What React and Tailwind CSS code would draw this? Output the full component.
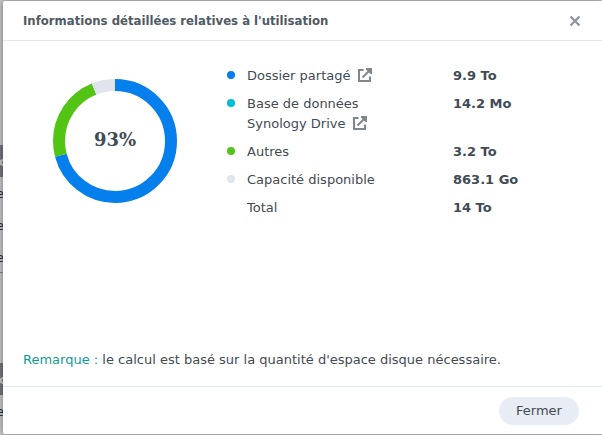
import React from 'react';

const usage = [
  { id: 'shared', label: 'Dossier partagé', value: '9.9 To', dot: 'bg-[#057feb]', stroke: 'stroke-[#057feb]', start: 0, share: 70.9, link: true },
  { id: 'drive', label: 'Base de données Synology Drive', value: '14.2 Mo', dot: 'bg-[#00bcd4]', link: true },
  { id: 'others', label: 'Autres', value: '3.2 To', dot: 'bg-[#52c41a]', stroke: 'stroke-[#52c414]', start: 70.9, share: 23 },
  { id: 'free', label: 'Capacité disponible', value: '863.1 Go', dot: 'bg-[#e1e4ed]', stroke: 'stroke-[#e1e4ed]', start: 93.9, share: 6.1 },
  { id: 'total', label: 'Total', value: '14 To' },
];

const ExternalIcon = () => (
  <svg viewBox="0 0 14 14" className="h-3.5 w-3.5" fill="none" stroke="#7f868d" strokeWidth="2" aria-hidden="true">
    <path d="M5.5 2H1v11h11V8.5" />
    <path d="M4.5 9.5L11.5 2.5" />
    <path d="M8 0h6v6h-1.5L8 1.5z" fill="#7f868d" stroke="none" />
  </svg>
);

const UsageChart = () => (
  <div className="grid h-[124px] w-[124px] shrink-0 place-items-center">
    <svg viewBox="0 0 124 124" className="col-start-1 row-start-1 h-full w-full -rotate-90" fill="none" aria-hidden="true">
      {usage.filter((item) => item.share).map((item) => (
        <circle
          key={item.id}
          cx="62"
          cy="62"
          r="56"
          pathLength="100"
          strokeWidth="12"
          strokeDasharray={`${item.share} 100`}
          strokeDashoffset={-item.start}
          className={item.stroke}
        />
      ))}
    </svg>
    <span className="col-start-1 row-start-1 pb-0.5 font-['DejaVu_Serif',serif] text-[18px] leading-5 font-bold">93%</span>
  </div>
);

const UsageTable = () => (
  <table className="text-left">
    <tbody>
      {usage.map((item) => (
        <tr key={item.id} className="align-top">
          <td className="w-5 pt-[9px]">
            {item.dot && <span className={`block h-2 w-2 rounded-full ${item.dot}`} />}
          </td>
          <th scope="row" className="w-[206px] py-1 pr-14 font-normal">
            {item.label}
            {item.link && (
              <a href="#" aria-label={`Ouvrir ${item.label}`} className="ml-2 inline-block align-[-2px] leading-none">
                <ExternalIcon />
              </a>
            )}
          </th>
          <td className="py-1 font-bold whitespace-nowrap">{item.value}</td>
        </tr>
      ))}
    </tbody>
  </table>
);

// Sliver of the storage page that stays visible beside the dialog
const PageEdge = () => (
  <div className="flex w-[3px] shrink-0 flex-col overflow-hidden pt-[145px] leading-[34px] whitespace-nowrap text-[#26313d]" aria-hidden="true">
    <div className="h-8 shrink-0 bg-[#73757a] font-bold text-[#c8c8ca]"><span className="-ml-px">o</span></div>
    <div className="h-8 shrink-0"><span className="-ml-1">e</span></div>
    <div className="h-8 shrink-0"><span className="-ml-1">e</span></div>
    <div className="h-8 shrink-0 border-b border-[#85868a]"><span className="-ml-1">e</span></div>
    <div className="mt-[90px] h-8 shrink-0 bg-[#73757a] font-bold text-[#c8c8ca]"><span className="-ml-px">o</span></div>
    <div className="h-8 shrink-0"><span className="-ml-1">e</span></div>
  </div>
);

const App = () => {
  return (
    <div className="flex h-screen overflow-hidden bg-[#c4c4c6] font-['DejaVu_Sans',Verdana,sans-serif] text-[13px] leading-5 text-[#414b55]">
      <PageEdge />
      <section
        role="dialog"
        aria-labelledby="usage-title"
        className="mt-px mb-px flex flex-1 flex-col rounded-tl-xs rounded-bl-xs bg-white shadow-[0_0_6px_rgba(0,0,0,0.4)]"
      >
        <header className="flex h-10 shrink-0 items-center justify-between border-b border-[#e1e8ee] px-5">
          <h1 id="usage-title" className="font-['DejaVu_Sans_Condensed','DejaVu_Sans',sans-serif] text-[13px] font-bold text-[#505a64]">
            Informations détaillées relatives à l'utilisation
          </h1>
          <button type="button" aria-label="Fermer la fenêtre" className="p-px">
            <svg viewBox="0 0 12 12" className="h-3 w-3" fill="none" stroke="#92979f" strokeWidth="2.4" aria-hidden="true">
              <path d="M1.5 1.5l9 9M10.5 1.5l-9 9" />
            </svg>
          </button>
        </header>

        <main className="flex flex-1 flex-col justify-between px-5 pt-[21px] pb-4">
          <div className="flex gap-[50px] pl-[30px]">
            <div className="pt-[17px]">
              <UsageChart />
            </div>
            <UsageTable />
          </div>
          <p>
            <span className="text-[#0f9b9b]">Remarque :</span> le calcul est basé sur la quantité d'espace disque nécessaire.
          </p>
        </main>

        <footer className="flex h-12 shrink-0 items-center justify-end border-t border-[#e1e8ee] pr-[23px]">
          <button type="button" className="h-7 w-20 rounded-full bg-[#e8edf5] text-center">Fermer</button>
        </footer>
      </section>
    </div>
  );
};

export default App;
